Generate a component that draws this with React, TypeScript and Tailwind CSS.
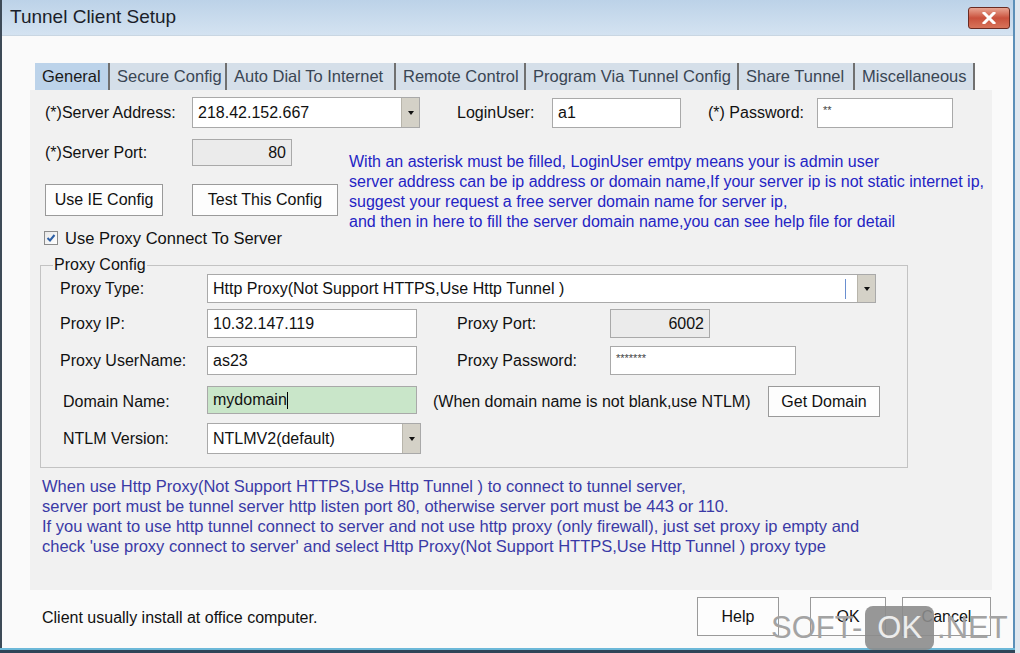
import React from "react";

function Field({ cls, children }: { cls: string; children?: React.ReactNode }) {
  return (
    <div className={"border border-[#a9a9a9] flex items-center px-[5px] text-[#111] " + cls}>
      {children}
    </div>
  );
}

function Combo({ cls, children, caret }: { cls: string; children?: React.ReactNode; caret?: boolean }) {
  return (
    <div className={"border border-[#a9a9a9] bg-white flex items-stretch text-[16px] text-[#111] " + cls}>
      <div className="flex-1 flex items-center px-[5px]">
        {children}
        {caret ? <div className="ml-auto mr-[6px] w-[1px] h-[20px] bg-[#6a8fd0]" /> : null}
      </div>
      <div className="w-[18px] bg-[#d4d1c7] border-l border-[#b8b5ab] flex items-center justify-center">
        <div className="w-0 h-0 border-l-[3px] border-r-[3px] border-t-[4px] border-l-transparent border-r-transparent border-t-[#111]" />
      </div>
    </div>
  );
}

function Btn({ cls, children }: { cls: string; children: React.ReactNode }) {
  return (
    <div className={"border border-[#9a9a9a] bg-[#fdfdfd] flex items-center justify-center text-[16px] text-[#111] " + cls}>
      {children}
    </div>
  );
}

const tabs: { label: string; cls: string; sel?: boolean }[] = [
  { label: "General", cls: "w-[75px]", sel: true },
  { label: "Secure Config", cls: "w-[117px]" },
  { label: "Auto Dial To Internet", cls: "w-[169px]" },
  { label: "Remote Control", cls: "w-[130px]" },
  { label: "Program Via Tunnel Config", cls: "w-[213px]" },
  { label: "Share Tunnel", cls: "w-[116px]" },
  { label: "Miscellaneous", cls: "w-[120px]" },
];

export default function App() {
  return (
    <div className="w-[1020px] h-[653px] relative overflow-hidden bg-[#dfe7ef] font-['Liberation_Sans',Arial,sans-serif]">
      <div className="w-[1015px] h-[648px] flex flex-col border-l-2 border-r-2 border-[#3d4a57] border-r-[#5b8fb8] bg-[#fafafa]">
        {/* title bar */}
        <div className="h-[36px] flex items-center bg-gradient-to-b from-[#bcd2e8] to-[#d4e3f1] border-b border-[#c9d6e2] shrink-0">
          <div className="ml-[8px] text-[19px] text-[#1b1f2a]">Tunnel Client Setup</div>
          <div className="ml-auto mr-[3px] w-[42px] h-[22px] rounded-[3px] border border-[#6a2b22] bg-gradient-to-b from-[#e8a593] via-[#c9503c] to-[#d7735a] flex items-center justify-center">
            <svg width="14" height="12" viewBox="0 0 14 12">
              <path d="M2 1 L12 11 M12 1 L2 11" stroke="#fff" strokeWidth="3" strokeLinecap="square" />
            </svg>
          </div>
        </div>

        {/* body */}
        <div className="flex-1 flex flex-col">
          {/* tabs */}
          <div className="mt-[27px] ml-[33px] h-[27px] flex text-[16.5px] text-[#3a4654]">
            {tabs.map((t) => (
              <div
                key={t.label}
                className={
                  t.cls +
                  " h-[27px] flex items-center pl-[7px] whitespace-nowrap border-r-2 border-[#707070] " +
                  (t.sel ? "bg-[#bcd3ea] text-[#1a1a1a]" : "bg-[#d5dfe9]")
                }
              >
                {t.label}
              </div>
            ))}
          </div>

          {/* panel */}
          <div className="ml-[28px] w-[962px] h-[500px] bg-[#f1f1f1] flex flex-col text-[16px] text-[#111]">
            {/* row 1 */}
            <div className="mt-[7px] pl-[15px] h-[31px] flex items-center">
              <div className="w-[147px]">(*)Server Address:</div>
              <Combo cls="w-[228px] h-[31px]">218.42.152.667</Combo>
              <div className="w-[37px]" />
              <div className="w-[95px]">LoginUser:</div>
              <Field cls="w-[129px] h-[30px] bg-white">a1</Field>
              <div className="w-[27px]" />
              <div className="w-[109px]">(*) Password:</div>
              <Field cls="w-[136px] h-[30px] bg-white items-start pt-[3px] text-[11px] text-[#444]">**</Field>
            </div>

            {/* rows 2-3 with note */}
            <div className="mt-[11px] h-[77px] flex">
              <div className="pl-[15px] w-[319px] flex flex-col">
                <div className="h-[27px] flex items-center">
                  <div className="w-[147px]">(*)Server Port:</div>
                  <Field cls="w-[100px] h-[27px] bg-[#ebebeb] justify-end">80</Field>
                </div>
                <div className="mt-[18px] h-[32px] flex">
                  <Btn cls="w-[118px] h-[32px]">Use IE Config</Btn>
                  <div className="w-[29px]" />
                  <Btn cls="w-[146px] h-[32px]">Test This Config</Btn>
                </div>
              </div>
              <div className="mt-[13px] leading-[20px] text-[#2424c4] whitespace-nowrap">
                <div>With an asterisk must be filled, LoginUser emtpy means your is admin user</div>
                <div>server address can be ip address or domain name,If your server ip is not static internet ip,</div>
                <div>suggest your request a free server domain name for server ip,</div>
                <div>and then in here to fill the server domain name,you can see help file for detail</div>
              </div>
            </div>

            {/* checkbox */}
            <div className="mt-[14px] ml-[14px] h-[16px] flex items-center">
              <div className="w-[14px] h-[14px] border border-[#8c8c8c] bg-gradient-to-br from-[#e8e8e8] to-white flex items-center justify-center">
                <svg width="10" height="10" viewBox="0 0 10 10">
                  <path d="M1.5 5 L4 7.5 L8.5 2" stroke="#2c5fa6" strokeWidth="2" fill="none" />
                </svg>
              </div>
              <div className="ml-[7px] text-[16.5px]">Use Proxy Connect To Server</div>
            </div>

            {/* group box */}
            <div className="mt-[19px] ml-[10px] w-[868px] h-[203px] border border-[#c3c3c3] relative flex flex-col">
              <div className="absolute -top-[10px] left-[12px] px-[1px] bg-[#f1f1f1] leading-[18px]">Proxy Config</div>

              <div className="mt-[8px] pl-[19px] h-[29px] flex items-center">
                <div className="w-[147px]">Proxy Type:</div>
                <Combo cls="w-[669px] h-[29px]" caret>
                  Http Proxy(Not Support HTTPS,Use Http Tunnel )
                </Combo>
              </div>

              <div className="mt-[6px] pl-[19px] h-[29px] flex items-center">
                <div className="w-[147px]">Proxy IP:</div>
                <Field cls="w-[210px] h-[29px] bg-white">10.32.147.119</Field>
                <div className="w-[40px]" />
                <div className="w-[153px]">Proxy Port:</div>
                <Field cls="w-[100px] h-[29px] bg-[#ebebeb] justify-end">6002</Field>
              </div>

              <div className="mt-[8px] pl-[19px] h-[29px] flex items-center">
                <div className="w-[147px]">Proxy UserName:</div>
                <Field cls="w-[210px] h-[29px] bg-white">as23</Field>
                <div className="w-[40px]" />
                <div className="w-[153px]">Proxy Password:</div>
                <Field cls="w-[186px] h-[29px] bg-white items-start pt-[3px] text-[11px] text-[#444]">*******</Field>
              </div>

              <div className="mt-[11px] pl-[22px] h-[31px] flex items-center">
                <div className="w-[144px]">Domain Name:</div>
                <Field cls="w-[210px] h-[28px] bg-[#c9e6c9] self-start">
                  mydomain<span className="w-[1px] h-[17px] bg-black" />
                </Field>
                <div className="w-[16px]" />
                <div className="w-[335px] whitespace-nowrap">(When domain name is not blank,use NTLM)</div>
                <Btn cls="w-[112px] h-[31px]">Get Domain</Btn>
              </div>

              <div className="mt-[6px] pl-[22px] h-[31px] flex items-center">
                <div className="w-[144px]">NTLM Version:</div>
                <Combo cls="w-[214px] h-[31px]">NTLMV2(default)</Combo>
              </div>
            </div>

            {/* bottom note */}
            <div className="mt-[8px] ml-[12px] leading-[20px] text-[16.5px] text-[#3a3aa6] whitespace-nowrap">
              <div>When use Http Proxy(Not Support HTTPS,Use Http Tunnel ) to connect to tunnel server,</div>
              <div>server port must be tunnel server http listen port 80, otherwise server port must be 443 or 110.</div>
              <div>If you want to use http tunnel connect to server and not use http proxy (only firewall), just set proxy ip empty and</div>
              <div>check 'use proxy connect to server' and select Http Proxy(Not Support HTTPS,Use Http Tunnel ) proxy type</div>
            </div>
          </div>

          {/* footer */}
          <div className="flex-1 flex items-start text-[16px] text-[#111]">
            <div className="ml-[40px] mt-[16px]">Client usually install at office computer.</div>
            <div className="ml-auto mr-[22px] mt-[7px] flex">
              <Btn cls="w-[82px] h-[39px]">Help</Btn>
              <div className="w-[31px]" />
              <Btn cls="w-[76px] h-[39px]">OK</Btn>
              <div className="w-[16px]" />
              <Btn cls="w-[89px] h-[39px]">Cancel</Btn>
            </div>
          </div>
        </div>
      </div>
      {/* bottom frame */}
      <div className="h-[5px] w-[1015px] border-t-2 border-[#6cb8d8] bg-[#2f4558]" />

      {/* watermark */}
      <div className="absolute left-[771px] top-[606px] flex items-center text-[31px] leading-[44px] text-[#a3a3a3]">
        <span>SOFT-</span>
        <span className="mx-[3px] px-[12px] h-[44px] rounded-[8px] bg-[#8c8c8c]/90 text-[#ececec] flex items-center">OK</span>
        <span>.NET</span>
      </div>
    </div>
  );
}
